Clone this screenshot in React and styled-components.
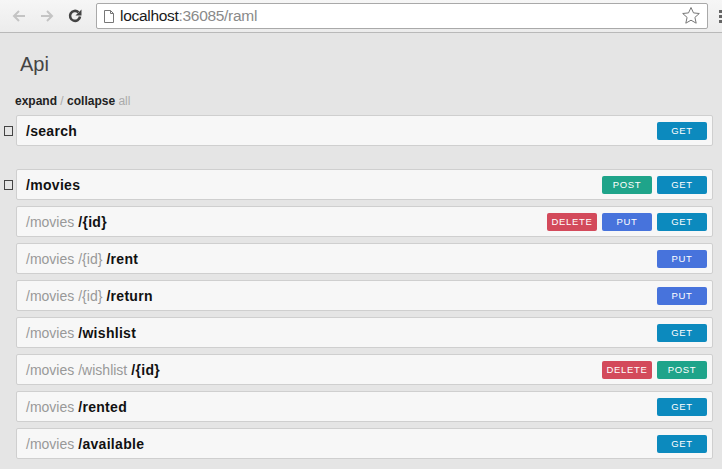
import styled, { createGlobalStyle } from "styled-components";

const Global = createGlobalStyle`
  html, body {
    margin: 0;
    padding: 0;
    background: #e5e5e5;
    font-family: "Liberation Sans", Arial, sans-serif;
  }
`;

const Toolbar = styled.div`
  display: flex;
  align-items: center;
  height: 32px;
  padding: 0 0 0 6px;
  background: linear-gradient(#f6f6f6, #ececec);
  border-bottom: 1px solid #b9b9b9;
  box-sizing: content-box;
`;

const NavButton = styled.div`
  display: flex;
  align-items: center;
  justify-content: center;
  width: 26px;
  height: 26px;
  margin-right: 2px;
`;

const UrlBox = styled.div`
  display: flex;
  align-items: center;
  flex: 1;
  height: 24px;
  margin-left: 6px;
  margin-right: 11px;
  background: #fff;
  border: 1px solid #a9a9a9;
  border-radius: 2px;
  padding: 0 6px 0 7px;
  font-size: 15.5px;
  color: #1a1a1a;
`;

const Host = styled.span`
  margin-left: 6px;
  letter-spacing: -0.3px;
`;

const Port = styled.span`
  color: #8a8a8a;
`;

const Spacer = styled.div`
  flex: 1;
`;

const Page = styled.div`
  padding: 19px 9px 0 4px;
`;

const Title = styled.h1`
  margin: 0 0 0 16px;
  font-size: 20px;
  font-weight: normal;
  color: #444;
  line-height: 24px;
`;

const Toggle = styled.div`
  margin: 18px 0 7px 11px;
  font-size: 12px;
  font-weight: bold;
  color: #222;
`;

const Muted = styled.span`
  font-weight: normal;
  color: #aaa;
`;

const Group = styled.div`
  display: flex;
  flex-direction: column;
  gap: 6px;
  margin-bottom: ${(p) => (p.$last ? 0 : "23px")};
`;

const RowLine = styled.div`
  display: flex;
  align-items: center;
`;

const Box = styled.div`
  width: 7px;
  height: 8px;
  border: 1px solid #444;
  margin-right: 3px;
  visibility: ${(p) => (p.$show ? "visible" : "hidden")};
`;

const Resource = styled.div`
  flex: 1;
  display: flex;
  align-items: center;
  height: 29px;
  padding: 0 5px 0 9px;
  background: #f7f7f7;
  border: 1px solid #cfcfcf;
  border-radius: 2px;
  font-size: 14px;
`;

const PathPart = styled.span`
  color: #999;
  margin-right: 4px;
`;

const Name = styled.span`
  font-weight: bold;
  color: #111;
  letter-spacing: 0.3px;
`;

const Methods = styled.div`
  display: flex;
  gap: 5px;
  margin-left: auto;
`;

const colors = {
  GET: "#0c8abe",
  POST: "#1fa48a",
  PUT: "#4773dc",
  DELETE: "#d34a5b",
};

const Method = styled.span`
  display: flex;
  align-items: center;
  justify-content: center;
  width: 50px;
  height: 18px;
  border-radius: 2px;
  background: ${(p) => colors[p.$m]};
  color: #fff;
  font-size: 9.5px;
  letter-spacing: 0.7px;
`;

const Row = ({ top, prefix = [], name, methods }) => (
  <RowLine>
    <Box $show={top} />
    <Resource>
      {prefix.map((p) => (
        <PathPart key={p}>{p}</PathPart>
      ))}
      <Name>{name}</Name>
      <Methods>
        {methods.map((m) => (
          <Method key={m} $m={m}>
            {m}
          </Method>
        ))}
      </Methods>
    </Resource>
  </RowLine>
);

const Arrow = ({ dir }) => (
  <svg width="16" height="16" viewBox="0 0 16 16">
    <g
      transform={dir === "right" ? "scale(-1,1) translate(-16,0)" : undefined}
      fill="none"
      stroke="#c4c4c4"
      strokeWidth="2"
    >
      <path d="M14 8H3M8 3L3 8l5 5" />
    </g>
  </svg>
);

const Reload = () => (
  <svg width="18" height="18" viewBox="0 0 18 18">
    <path
      d="M14 9.5a5 5 0 1 1-1.6-4.3"
      fill="none"
      stroke="#444"
      strokeWidth="2.6"
    />
    <path d="M15.5 2.5v6h-6z" fill="#444" />
  </svg>
);

const PageIcon = () => (
  <svg width="10" height="13" viewBox="0 0 10 13">
    <path
      d="M0.5 0.5h6l3 3v9h-9z M6.5 0.5v3h3"
      fill="#fff"
      stroke="#777"
      strokeWidth="1"
    />
  </svg>
);

const Star = () => (
  <svg width="20" height="20" viewBox="0 0 20 20">
    <path
      d="M10 1.5l2.5 5.4 5.8.6-4.4 3.9 1.3 5.8L10 14.2l-5.2 3 1.3-5.8L1.7 7.5l5.8-.6z"
      fill="#fff"
      stroke="#777"
      strokeWidth="1"
    />
  </svg>
);

const Dots = styled.div`
  display: flex;
  flex-direction: column;
  gap: 2px;
  width: 3px;

  span {
    display: block;
    width: 3px;
    height: 3px;
    background: #666;
  }
`;

export default function App() {
  return (
    <>
      <Global />
      <Toolbar>
        <NavButton>
          <Arrow dir="left" />
        </NavButton>
        <NavButton>
          <Arrow dir="right" />
        </NavButton>
        <NavButton>
          <Reload />
        </NavButton>
        <UrlBox>
          <PageIcon />
          <Host>
            localhost<Port>:36085/raml</Port>
          </Host>
          <Spacer />
          <Star />
        </UrlBox>
        <Dots>
          <span />
          <span />
          <span />
        </Dots>
      </Toolbar>
      <Page>
        <Title>Api</Title>
        <Toggle>
          expand <Muted>/</Muted> collapse <Muted>all</Muted>
        </Toggle>
        <Group>
          <Row top name="/search" methods={["GET"]} />
        </Group>
        <Group $last>
          <Row top name="/movies" methods={["POST", "GET"]} />
          <Row prefix={["/movies"]} name="/{id}" methods={["DELETE", "PUT", "GET"]} />
          <Row prefix={["/movies", "/{id}"]} name="/rent" methods={["PUT"]} />
          <Row prefix={["/movies", "/{id}"]} name="/return" methods={["PUT"]} />
          <Row prefix={["/movies"]} name="/wishlist" methods={["GET"]} />
          <Row prefix={["/movies", "/wishlist"]} name="/{id}" methods={["DELETE", "POST"]} />
          <Row prefix={["/movies"]} name="/rented" methods={["GET"]} />
          <Row prefix={["/movies"]} name="/available" methods={["GET"]} />
        </Group>
      </Page>
    </>
  );
}
